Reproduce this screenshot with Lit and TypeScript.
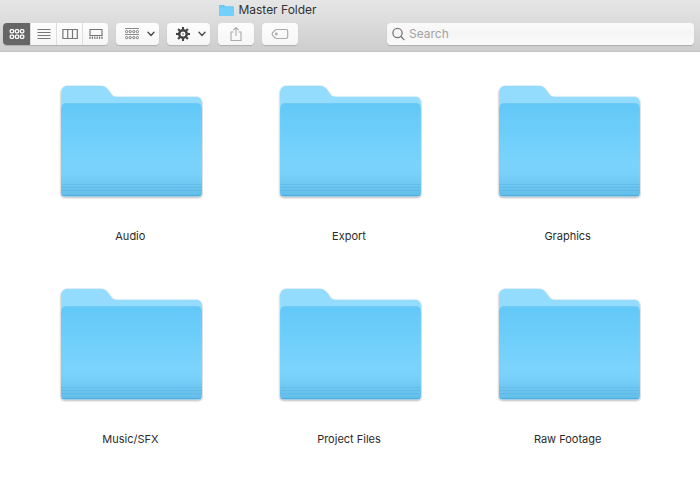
import { LitElement, html, css, svg } from "lit";
import { customElement, property, state } from "lit/decorators.js";
import { classMap } from "lit/directives/class-map.js";

const tiles = (xs: number[], ys: number[], w: number, h: number) =>
  ys.map((y) => xs.map((x) => svg`<rect x=${x} y=${y} width=${w} height=${h} rx="1"/>`));

const chevron = html`<svg class="chevron" width="8" height="6" viewBox="0 0 8 6">
  <path d="M1 1.2 4 4.4 7 1.2" fill="none" stroke="#4c4c4c" stroke-width="1.4" stroke-linecap="round" stroke-linejoin="round"/>
</svg>`;

const views = [
  {
    id: "icons",
    label: "Icon view",
    icon: svg`<g fill="none" stroke="currentColor" stroke-width="1.3">${tiles([1.2, 6.3, 11.4], [3.6, 9.1], 3.4, 3.2)}</g>`,
  },
  {
    id: "list",
    label: "List view",
    icon: svg`<path d="M1.5 3.5h13M1.5 6.5h13M1.5 9.5h13M1.5 12.5h13" stroke="currentColor" fill="none"/>`,
  },
  {
    id: "columns",
    label: "Column view",
    icon: svg`<path d="M.9 3.5h14.4v9H.9zM5.7 3.5v9M10.5 3.5v9" stroke="currentColor" stroke-width="1.2" fill="none"/>`,
  },
  {
    id: "gallery",
    label: "Gallery view",
    icon: svg`<path d="M2 3.5h12v6H2z" stroke="currentColor" stroke-width="1.2" fill="none"/>
      <path d="M2 10.500v2.500M4.400 10.500v2.500M6.800 10.500v2.500M9.200 10.500v2.500M11.600 10.500v2.500M14 10.500v2.500" stroke="currentColor" stroke-width="1.2" fill="none"/>`,
  },
];

const gearTeeth = [0, 45, 90, 135].map(
  (a) => svg`<path d="M8 1v14" transform="rotate(${a} 8 8)" stroke="#444" stroke-width="2.1"/>`
);

@customElement("folder-item")
export class FolderItem extends LitElement {
  @property() name = "";

  static styles = css`
    :host {
      display: block;
    }
    .item {
      display: flex;
      flex-direction: column;
      align-items: center;
      gap: 27px;
      width: 100%;
      padding: 0;
      border: 0;
      background: none;
      font: 11px/16px Inter, "Liberation Sans", sans-serif;
      color: #2b2b2b;
    }
    .folder {
      display: block;
      width: 144px;
      height: 116px;
    }
    .name {
      padding-right: 2px;
    }
  `;

  render() {
    return html`<button class="item" type="button">
      <svg class="folder" viewBox="-0.6 0 144 116" aria-hidden="true">
        <defs>
          <linearGradient id="front" x1="0" y1="0" x2="0" y2="1">
            <stop offset="0" stop-color="#63c8f7"/>
            <stop offset=".2" stop-color="#69ccf9"/>
            <stop offset=".65" stop-color="#7ad3fc"/>
            <stop offset=".76" stop-color="#78d1fb"/>
            <stop offset=".9" stop-color="#6bc5ef"/>
            <stop offset="1" stop-color="#62bdea"/>
          </linearGradient>
          <filter id="shadow" x="-5%" y="-5%" width="110%" height="112%">
            <feDropShadow dx="0" dy="1" stdDeviation="1" flood-color="#000" flood-opacity=".38"/>
          </filter>
        </defs>
        <g filter="url(#shadow)">
          <path fill="#93dcfe" d="M1.5 8C1.5 3.2 4.500 .8 8 .8H40.500C45 .8 47 2.500 49.500 6C52 9.800 53 11.700 57 11.700H137C140 11.700 142.300 14 142.300 17.500V108C142.300 110 141 111.300 139 111.300H5C3 111.300 1.500 110 1.500 108Z"/>
          <path fill="url(#front)" d="M1.500 24C1.500 20.500 3.500 18.500 7 18.500H137C140.300 18.500 142.300 20.500 142.300 24V108C142.300 110 141 111.300 139 111.300H5C3 111.300 1.500 110 1.500 108Z"/>
        </g>
        <path d="M3 19.500Q4.500 18.500 7 18.500H137Q139.500 18.500 141 19.500" fill="none" stroke="#5bbfec" stroke-opacity=".5" stroke-width=".8"/>
        <path d="M1.500 99.500H142.300M1.500 102.500H142.300M1.500 105.500H142.300" stroke="#56b2df" stroke-opacity=".45"/>
        <path d="M3 110.500H141" stroke="#4fadde"/>
      </svg>
      <span class="name">${this.name}</span>
    </button>`;
  }
}

@customElement("app-root")
export class AppRoot extends LitElement {
  @state() private view = "icons";

  private folders = ["Audio", "Export", "Graphics", "Music/SFX", "Project Files", "Raw Footage"];

  static styles = css`
    :host {
      display: block;
      min-height: 100vh;
      background: #fff;
      font-family: Inter, "Liberation Sans", sans-serif;
      color: #333;
    }
    * {
      box-sizing: border-box;
    }
    .header {
      background: linear-gradient(#e6e6e6, #cecece);
      border-bottom: 1px solid #c6c6c6;
      padding-bottom: 6px;
    }
    .title {
      display: flex;
      align-items: center;
      justify-content: center;
      gap: 4px;
      margin: 0;
      padding: 2px 164px 5px 0;
      font-size: 12px;
      line-height: 16px;
      font-weight: 400;
    }
    .toolbar {
      display: flex;
      align-items: center;
      gap: 8px;
      padding: 0 6px 0 3px;
    }
    button {
      display: flex;
      align-items: center;
      justify-content: center;
      margin: 0;
      padding: 0;
      height: 22px;
      border: 0;
      background: linear-gradient(#fdfdfd, #f6f6f6);
      color: #777;
    }
    .views {
      display: flex;
      gap: 1px;
      border-radius: 4px;
      overflow: hidden;
      background: #dedede;
    }
    .views,
    .tool,
    .search {
      box-shadow: 0 1px 1px rgba(0, 0, 0, 0.17);
    }
    .view {
      width: 25px;
    }
    .view.active {
      width: 27px;
      background: #666;
      color: #fff;
    }
    .tool {
      border-radius: 4px;
      width: 36px;
    }
    .tool.menu {
      width: 43px;
      gap: 7px;
      padding-left: 3px;
    }
    .search {
      display: flex;
      align-items: center;
      gap: 4px;
      flex: 1;
      max-width: 307px;
      height: 22px;
      margin-left: auto;
      padding: 0 5px;
      border-radius: 4px;
      background: linear-gradient(#fafafa, #f5f5f5 50%, #fbfbfb);
    }
    .input {
      flex: 1;
      min-width: 0;
      padding: 0;
      border: 0;
      outline: 0;
      background: none;
      font: 12px/16px Inter, "Liberation Sans", sans-serif;
      color: #333;
    }
    .input::placeholder {
      color: #a3a3a3;
      opacity: 1;
    }
    .grid {
      display: grid;
      grid-template-columns: repeat(3, 1fr);
      row-gap: 44px;
      padding: 33px 22px;
    }
  `;

  render() {
    return html`
      <header class="header">
        <h1 class="title">
          <svg width="15" height="13" viewBox="0 0 15 13" aria-hidden="true">
            <path fill="#6cc8f3" d="M0 2Q0 1 1 1H5L6.500 2.200H14Q15 2.200 15 3.200V11Q15 12 14 12H1Q0 12 0 11Z"/>
            <path fill="#72d0fb" d="M0 4Q0 3.500 .7 3.500H14.300Q15 3.500 15 4V11Q15 12 14 12H1Q0 12 0 11Z"/>
          </svg>
          <span>Master Folder</span>
        </h1>
        <div class="toolbar">
          <div class="views" role="group" aria-label="View">
            ${views.map(
              (v) => html`<button
                type="button"
                class=${classMap({ view: true, active: v.id === this.view })}
                aria-label=${v.label}
                aria-pressed=${v.id === this.view}
                @click=${() => (this.view = v.id)}
              >
                <svg width="16" height="16" viewBox="0 0 16 16">${v.icon}</svg>
              </button>`
            )}
          </div>
          <button class="tool menu" type="button" aria-label="Group items" aria-haspopup="menu">
            <svg width="16" height="16" viewBox="0 0 16 16">
              <path d="M1 2.500h14M1 8.500h14" stroke="#8a8a8a"/>
              <g fill="none" stroke="#777">${tiles([1.5, 5.1, 8.700, 12.3], [4.5, 10.5], 2.2, 2.2)}</g>
            </svg>
            ${chevron}
          </button>
          <button class="tool menu" type="button" aria-label="Actions" aria-haspopup="menu">
            <svg width="16" height="16" viewBox="0 0 16 16">
              <path fill="#444" fill-rule="evenodd" d="M8 3a5 5 0 1 1 0 10a5 5 0 1 1 0-10ZM8 5.500a2.500 2.500 0 1 0 0 5a2.500 2.500 0 1 0 0-5Z"/>
              <mask id="hub"><rect width="16" height="16" fill="#fff"/><circle cx="8" cy="8" r="3" fill="#000"/></mask>
              <g mask="url(#hub)">${gearTeeth}</g>
              <circle cx="8" cy="8" r="1" fill="#999"/>
            </svg>
            ${chevron}
          </button>
          <button class="tool" type="button" aria-label="Share">
            <svg width="16" height="16" viewBox="0 0 16 16" fill="none" stroke="#aaa" stroke-width="1.100">
              <path d="M5.500 6H3v8.500h10V6h-2.500M8 10V1.500M5.300 4.200 8 1.500l2.700 2.700"/>
            </svg>
          </button>
          <button class="tool" type="button" aria-label="Tags">
            <svg width="18" height="12" viewBox="0 0 18 12" fill="none" stroke="#aaa" stroke-width="1.200">
              <path d="M5.300 1.500H15Q16.700 1.500 16.700 3.200V8.800Q16.700 10.500 15 10.500H5.300Q4.600 10.500 4 9.900L1.400 6.900Q.8 6 1.400 5.100L4 2.100Q4.600 1.500 5.300 1.500Z"/>
              <circle cx="5.300" cy="6" r=".8"/>
            </svg>
          </button>
          <label class="search">
            <svg width="13" height="14" viewBox="0 0 13 14" fill="none" stroke="#777" stroke-width="1.300" stroke-linecap="round">
              <circle cx="5.500" cy="6" r="4.600"/>
              <path d="M9 9.500 12 12.600"/>
            </svg>
            <input class="input" type="search" placeholder="Search" aria-label="Search" />
          </label>
        </div>
      </header>
      <main class="grid">
        ${this.folders.map((name) => html`<folder-item .name=${name}></folder-item>`)}
      </main>
    `;
  }
}
